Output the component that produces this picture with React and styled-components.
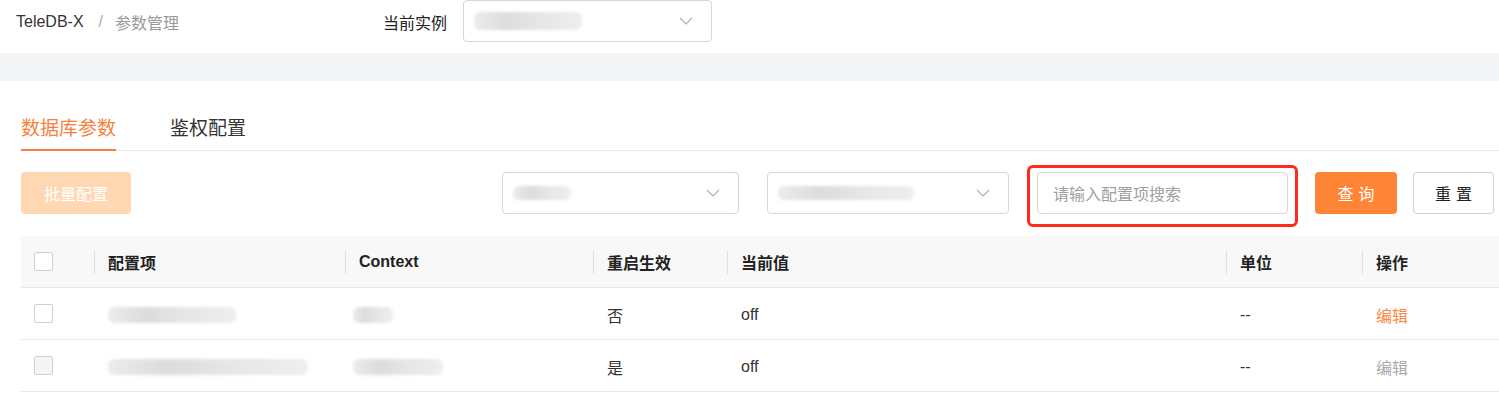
import styled, { createGlobalStyle } from 'styled-components';

const GlobalStyle = createGlobalStyle`
    body {
        margin: 0;
        background: #fff;
        font-family: "Liberation Sans", "Noto Sans CJK SC", sans-serif;
        color: #333;
    }
    * { box-sizing: border-box; }
`;

const columns = '73px 251px 248px 134px 499px 136px 1fr';

const rows = [
    { name: 128, ctx: 40, restart: '否', value: 'off', unit: '--', disabled: false },
    { name: 200, ctx: 90, restart: '是', value: 'off', unit: '--', disabled: true },
];

function Chevron() {
    return (
        <svg width="14" height="8" viewBox="0 0 14 8">
            <polyline points="1,1 7,7 13,1" fill="none" stroke="#b0b0b0" strokeWidth="1.2" />
        </svg>
    );
}

function App() {
    return (
        <Page>
            <GlobalStyle />
            <Header>
                <Crumbs>
                    <CrumbRoot>TeleDB-X</CrumbRoot>
                    <CrumbSep>/</CrumbSep>
                    <CrumbCurrent>参数管理</CrumbCurrent>
                </Crumbs>
                <InstanceLabel>当前实例</InstanceLabel>
                <Select $width={249}>
                    <Blur $width={108} $height={18} />
                    <Chevron />
                </Select>
            </Header>
            <Band />
            <Content>
                <TabBar>
                    <Tab $active>数据库参数</Tab>
                    <Tab>鉴权配置</Tab>
                </TabBar>
                <Toolbar>
                    <BatchButton>批量配置</BatchButton>
                    <Filters>
                        <Select $width={237}>
                            <Blur $width={58} $height={14} />
                            <Chevron />
                        </Select>
                        <Select $width={242}>
                            <Blur $width={136} $height={14} />
                            <Chevron />
                        </Select>
                        <SearchWrap>
                            <SearchInput placeholder="请输入配置项搜索" />
                            <Highlight />
                        </SearchWrap>
                        <PrimaryButton>查询</PrimaryButton>
                        <PlainButton>重置</PlainButton>
                    </Filters>
                </Toolbar>
                <Table>
                    <HeadRow>
                        <CheckCell><Checkbox /></CheckCell>
                        <HeadCell>配置项</HeadCell>
                        <HeadCell>Context</HeadCell>
                        <HeadCell>重启生效</HeadCell>
                        <HeadCell>当前值</HeadCell>
                        <HeadCell>单位</HeadCell>
                        <HeadCell>操作</HeadCell>
                    </HeadRow>
                    {rows.map((r, i) => (
                        <BodyRow key={i}>
                            <CheckCell><Checkbox $disabled={r.disabled} /></CheckCell>
                            <Cell><Blur $width={r.name} $height={16} /></Cell>
                            <Cell $tight><Blur $width={r.ctx} $height={16} /></Cell>
                            <Cell>{r.restart}</Cell>
                            <Cell>{r.value}</Cell>
                            <Cell>{r.unit}</Cell>
                            <Cell><EditLink $disabled={r.disabled}>编辑</EditLink></Cell>
                        </BodyRow>
                    ))}
                </Table>
            </Content>
        </Page>
    );
}

export default App;

const Page = styled.div`
    width: 1499px;
    min-height: 397px;
    background: #fff;
`;

const Header = styled.header`
    height: 53px;
    display: flex;
    align-items: flex-start;
    padding-left: 16px;
`;

const Crumbs = styled.div`
    display: flex;
    align-items: center;
    height: 44px;
    font-size: 16px;
    width: 367px;
`;

const CrumbRoot = styled.span`
    color: #333;
`;

const CrumbSep = styled.span`
    color: #aaa;
    margin: 0 12px 0 15px;
`;

const CrumbCurrent = styled.span`
    color: #999;
`;

const InstanceLabel = styled.span`
    font-size: 16px;
    color: #222;
    line-height: 48px;
    margin-right: 16px;
`;

const Select = styled.div`
    width: ${p => p.$width}px;
    height: 42px;
    border: 1px solid #d6d6d6;
    border-radius: 4px;
    display: flex;
    align-items: center;
    justify-content: space-between;
    padding: 0 18px 0 10px;
    background: #fff;
`;

const Blur = styled.span`
    display: inline-block;
    width: ${p => p.$width}px;
    height: ${p => p.$height}px;
    background: linear-gradient(90deg, #ececec, #dcdcdc 30%, #e6e6e6 60%, #eeeeee);
    filter: blur(1.5px);
    border-radius: 6px;
`;

const Band = styled.div`
    height: 28px;
    background: #f4f5f7;
`;

const Content = styled.main`
    padding-left: 21px;
`;

const TabBar = styled.nav`
    display: flex;
    gap: 54px;
    padding-top: 33px;
    border-bottom: 1px solid #e8e8e8;
`;

const Tab = styled.div`
    font-family: "Noto Sans CJK SC", sans-serif;
    font-size: 19px;
    line-height: 26px;
    padding-bottom: 9px;
    margin-bottom: -1px;
    color: ${p => p.$active ? '#f5823c' : '#333'};
    border-bottom: 2px solid ${p => p.$active ? '#f5823c' : 'transparent'};
`;

const Toolbar = styled.div`
    display: flex;
    justify-content: space-between;
    align-items: center;
    margin-top: 21px;
    padding-right: 5px;
`;

const BatchButton = styled.button`
    width: 110px;
    height: 42px;
    border: none;
    border-radius: 4px;
    background: #ffd8b3;
    color: #fff;
    font-family: "Noto Sans CJK SC", sans-serif;
    font-size: 16px;
    padding: 0;
`;

const Filters = styled.div`
    display: flex;
    align-items: center;
    gap: 28px;
`;

const SearchWrap = styled.div`
    position: relative;
    margin-right: -1px;
`;

const SearchInput = styled.input`
    width: 251px;
    height: 42px;
    border: 1px solid #d6d6d6;
    border-radius: 4px;
    padding: 0 15px;
    font-family: "Noto Sans CJK SC", sans-serif;
    font-size: 16px;
    outline: none;
    &::placeholder { color: #a0a0a0; }
`;

const Highlight = styled.div`
    position: absolute;
    left: -10px;
    top: -7px;
    right: -10px;
    bottom: -13px;
    border: 3px solid #ff2a1f;
    border-radius: 6px;
    pointer-events: none;
`;

const PrimaryButton = styled.button`
    width: 82px;
    height: 42px;
    border: none;
    border-radius: 4px;
    background: #fd8535;
    color: #fff;
    font-family: "Noto Sans CJK SC", sans-serif;
    font-size: 16px;
    letter-spacing: 5px;
    padding: 0 0 0 5px;
`;

const PlainButton = styled(PrimaryButton)`
    width: 81px;
    margin-left: -12px;
    background: #fff;
    color: #222;
    border: 1px solid #cfcfcf;
`;

const Table = styled.div`
    margin-top: 22px;
    font-size: 16px;
`;

const HeadRow = styled.div`
    display: grid;
    grid-template-columns: ${columns};
    height: 52px;
    background: #f8f8f8;
    border-bottom: 1px solid #e8e8e8;
`;

const BodyRow = styled.div`
    display: grid;
    grid-template-columns: ${columns};
    height: 52px;
    border-bottom: 1px solid #e8e8e8;
`;

const CheckCell = styled.div`
    display: flex;
    align-items: center;
    padding-left: 13px;
`;

const Checkbox = styled.span`
    width: 19px;
    height: 19px;
    border: 1px solid #d0d0d0;
    border-radius: 2px;
    background: ${p => p.$disabled ? '#f5f5f5' : '#fff'};
`;

const HeadCell = styled.div`
    position: relative;
    display: flex;
    align-items: center;
    padding-left: 14px;
    font-weight: bold;
    color: #222;

    &::before {
        content: '';
        position: absolute;
        left: 0;
        top: 14px;
        height: 24px;
        border-left: 1px solid #e0e0e0;
    }
`;

const Cell = styled.div`
    display: flex;
    align-items: center;
    padding-left: ${p => p.$tight ? 8 : 14}px;
    padding-top: 2px;
    color: #333;
`;

const EditLink = styled.span`
    font-family: "Noto Sans CJK SC", sans-serif;
    color: ${p => p.$disabled ? '#aaa' : '#fb8840'};
`;
